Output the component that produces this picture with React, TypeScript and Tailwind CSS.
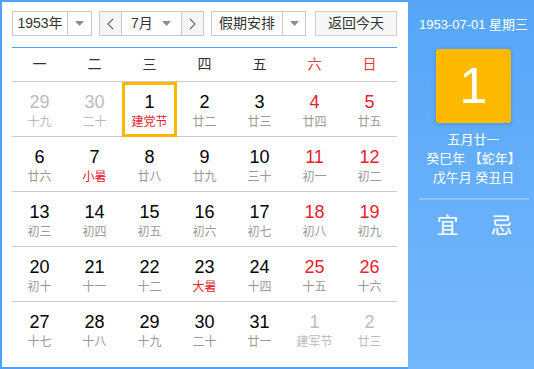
import React from "react";

type Cell = { d: number; l: string; other?: boolean; red?: boolean; lred?: boolean; sel?: boolean };

const rows: Cell[][] = [
  [
    { d: 29, l: "十九", other: true },
    { d: 30, l: "二十", other: true },
    { d: 1, l: "建党节", lred: true, sel: true },
    { d: 2, l: "廿二" },
    { d: 3, l: "廿三" },
    { d: 4, l: "廿四", red: true },
    { d: 5, l: "廿五", red: true },
  ],
  [
    { d: 6, l: "廿六" },
    { d: 7, l: "小暑", lred: true },
    { d: 8, l: "廿八" },
    { d: 9, l: "廿九" },
    { d: 10, l: "三十" },
    { d: 11, l: "初一", red: true },
    { d: 12, l: "初二", red: true },
  ],
  [
    { d: 13, l: "初三" },
    { d: 14, l: "初四" },
    { d: 15, l: "初五" },
    { d: 16, l: "初六" },
    { d: 17, l: "初七" },
    { d: 18, l: "初八", red: true },
    { d: 19, l: "初九", red: true },
  ],
  [
    { d: 20, l: "初十" },
    { d: 21, l: "十一" },
    { d: 22, l: "十二" },
    { d: 23, l: "大暑", lred: true },
    { d: 24, l: "十四" },
    { d: 25, l: "十五", red: true },
    { d: 26, l: "十六", red: true },
  ],
  [
    { d: 27, l: "十七" },
    { d: 28, l: "十八" },
    { d: 29, l: "十九" },
    { d: 30, l: "二十" },
    { d: 31, l: "廿一" },
    { d: 1, l: "建军节", other: true },
    { d: 2, l: "廿三", other: true },
  ],
];

const weekdays = ["一", "二", "三", "四", "五", "六", "日"];

function Caret() {
  return (
    <svg width="9" height="5" viewBox="0 0 9 5">
      <path d="M0 0 L9 0 L4.5 5 Z" fill="#8c8c8c" />
    </svg>
  );
}

function Chevron({ dir }: { dir: "l" | "r" }) {
  return (
    <svg width="7" height="12" viewBox="0 0 7 12">
      <path
        d={dir === "l" ? "M6 1 L1 6 L6 11" : "M1 1 L6 6 L1 11"}
        fill="none"
        stroke="#666"
        strokeWidth="1.1"
      />
    </svg>
  );
}

export default function App() {
  const font = { fontFamily: '"Liberation Sans", "Noto Sans CJK SC", sans-serif' };
  return (
    <div className="flex w-[534px] h-[369px] overflow-hidden" style={font}>
      <div className="w-[408px] h-[369px] bg-white border-l-2 border-t-2 border-b-2 border-[#50a2f6] pl-[10px] pt-[9px]">
        {/* controls */}
        <div className="flex h-[25px] text-[14px] text-[#333]">
          <div className="flex w-[80px] h-[25px] border border-[#c8c8c8] bg-white">
            <div className="w-[54px] flex items-center justify-center">1953年</div>
            <div className="flex-1 flex items-center justify-center border-l border-[#c8c8c8]">
              <Caret />
            </div>
          </div>
          <div className="flex w-[105px] h-[25px] border border-[#c8c8c8] ml-[7px]">
            <div className="w-[22px] flex items-center justify-center bg-[#f5f5f5] border-r border-[#c8c8c8]">
              <Chevron dir="l" />
            </div>
            <div className="flex-1 flex items-center bg-white">
              <span className="ml-[9px]">7月</span>
              <span className="ml-auto mr-[10px] flex">
                <Caret />
              </span>
            </div>
            <div className="w-[22px] flex items-center justify-center bg-[#f5f5f5] border-l border-[#c8c8c8]">
              <Chevron dir="r" />
            </div>
          </div>
          <div className="flex w-[95px] h-[25px] border border-[#c8c8c8] bg-white ml-[7px]">
            <div className="w-[70px] flex items-center justify-center">假期安排</div>
            <div className="flex-1 flex items-center justify-center border-l border-[#c8c8c8]">
              <Caret />
            </div>
          </div>
          <div className="w-[82px] h-[25px] ml-[9px] border border-[#d0d0d0] bg-[#f7f7f7] flex items-center justify-center">
            返回今天
          </div>
        </div>

        <div className="w-[385px] mt-[11px] border-t border-[#50a2f6]">
          <div className="grid grid-cols-7 h-[34px] border-b border-[#cccccc] text-[14px]">
            {weekdays.map((w, i) => (
              <div
                key={w}
                className={`flex items-center justify-center ${i >= 5 ? "text-[#e33a3a]" : "text-[#333]"}`}
              >
                {w}
              </div>
            ))}
          </div>
          {rows.map((r, ri) => (
            <div
              key={ri}
              className={`grid grid-cols-7 h-[55px] ${ri < rows.length - 1 ? "border-b border-[#cccccc]" : ""}`}
            >
              {r.map((c, ci) => (
                <div key={ci} className="relative flex flex-col items-center pt-[9px]">
                  {c.sel && (
                    <span className="absolute left-0 top-0 w-[55px] h-[55px] border-[3px] border-[#ffb800]" />
                  )}
                  <span
                    className={`text-[18px] leading-[22px] ${
                      c.other ? "text-[#bbbbbb]" : c.red ? "text-[#e8212e]" : "text-black"
                    }`}
                  >
                    {c.d}
                  </span>
                  <span
                    className={`text-[12px] leading-[16px] mt-[1px] ${
                      c.lred ? "text-[#e8212e]" : c.other ? "text-[#bbbbbb]" : "text-[#999999]"
                    }`}
                  >
                    {c.l}
                  </span>
                </div>
              ))}
            </div>
          ))}
        </div>
      </div>

      <div className="flex-1 h-[369px] pl-[5px] bg-gradient-to-b from-[#56a6f8] to-[#74b7fb] flex flex-col items-center text-white">
        <div className="mt-[16px] text-[13px] leading-[18px]">1953-07-01 星期三</div>
        <div className="mt-[15px] w-[75px] h-[74px] rounded-[3px] bg-[#ffb900] shadow-[0_1px_4px_rgba(0,60,140,0.25)] flex items-center justify-center text-[50px] leading-none">
          1
        </div>
        <div className="mt-[7px] text-[13px] leading-[19px] flex flex-col items-center">
          <div>五月廿一</div>
          <div>癸巳年 【蛇年】</div>
          <div>戊午月 癸丑日</div>
        </div>
        <div className="mt-[11px] w-[110px] h-[2px] bg-[#8cc4fb]" />
        <div className="mt-[12px] flex w-[110px] justify-around text-[22px] leading-[28px] pl-[2px]">
          <span>宜</span>
          <span>忌</span>
        </div>
      </div>
    </div>
  );
}
